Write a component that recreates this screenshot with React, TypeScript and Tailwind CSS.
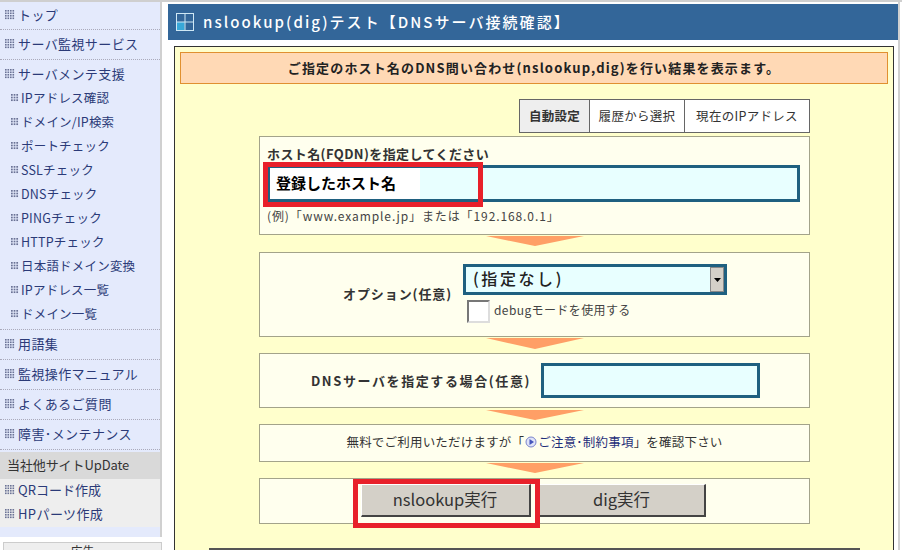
import React from "react";

function Dots({ small }: { small?: boolean }) {
  const n = small ? 3 : 4;
  const cells = [];
  for (let y = 0; y < n; y++) for (let x = 0; x < n; x++) cells.push(<rect key={x + "-" + y} x={x * 2.5} y={y * 2.5} width="1.6" height="1.6" fill="#6b7396" />);
  return (
    <svg width={small ? 8 : 10} height={small ? 8 : 10} viewBox={small ? "0 0 7.5 7.5" : "0 0 10 10"} className="shrink-0">
      {cells}
    </svg>
  );
}

function Top({ label, cls }: { label: string; cls: string }) {
  return (
    <div className={"flex items-center gap-[3px] pl-[5px] text-[13px] tracking-[0.4px] text-[#2b3a78] " + cls}>
      <Dots />
      <span>{label}</span>
    </div>
  );
}

function Sub({ label }: { label: string }) {
  return (
    <div className="flex h-[24px] items-center gap-[2px] pl-[11px] text-[12.5px] tracking-[0.2px] text-[#2b3a78]">
      <Dots small />
      <span>{label}</span>
    </div>
  );
}

function Arrow({ h = 10 }: { h?: number }) {
  return (
    <div className="flex justify-center">
      <svg width="98" height={h} viewBox="0 0 98 10" preserveAspectRatio="none">
        <polygon points="0,0 98,0 49,10" fill="#ff9f66" />
      </svg>
    </div>
  );
}

const dotted = "border-b border-dotted border-[#aab] pb-[2px]";

export default function App() {
  return (
    <div className="flex h-[550px] w-[902px] overflow-hidden border-t-2 border-[#cfcfcf] bg-white font-['Noto_Sans_CJK_JP','Liberation_Sans',sans-serif]">
      <aside className="flex w-[162px] shrink-0 flex-col">
        <div className="border-r-2 border-[#d0d0d0] bg-[#e4eafc]">
          <Top label="トップ" cls={"h-[28px] " + dotted} />
          <Top label="サーバ監視サービス" cls={"h-[30px] " + dotted} />
          <div className="border-b border-dotted border-[#aab] pb-[3px] pt-[2px]">
            <Top label="サーバメンテ支援" cls="h-[24px]" />
            {["IPアドレス確認", "ドメイン/IP検索", "ポートチェック", "SSLチェック", "DNSチェック", "PINGチェック", "HTTPチェック", "日本語ドメイン変換", "IPアドレス一覧", "ドメイン一覧"].map((s) => (
              <Sub key={s} label={s} />
            ))}
          </div>
          <Top label="用語集" cls={"h-[30px] " + dotted} />
          <Top label="監視操作マニュアル" cls={"h-[30px] " + dotted} />
          <Top label="よくあるご質問" cls={"h-[30px] " + dotted} />
          <Top label="障害･メンテナンス" cls={"h-[30px] " + dotted} />
          <div className="h-[2px]" />
          <div className="flex h-[27px] items-center bg-[#d9d9d9] pb-[1px] pl-[7px] text-[13px] tracking-[-0.1px] text-[#333]">当社他サイトUpDate</div>
          <div className="bg-[#eeeeee]">
            <Top label="QRコード作成" cls="h-[24px] pb-[2px] tracking-[0px]" />
            <Top label="HPパーツ作成" cls="h-[24px] pb-[2px] tracking-[0.2px]" />
          </div>
          <div className="h-[10px]" />
        </div>
        <div className="ml-[3px] mt-[5px] flex h-[20px] justify-center border border-[#ccc] bg-[#eeeeee] text-[12px] leading-[15px] text-[#333]">広告</div>
      </aside>

      <main className="ml-[6px] flex w-[732px] flex-col border-r-2 border-[#d0d0d0] pt-[2px]">
        <div className="flex h-[36px] shrink-0 items-center gap-[9px] bg-[#336699] pl-[8px] pr-[2px] text-[15px] font-medium tracking-[2.05px] text-white">
          <svg width="18" height="18" viewBox="0 0 18 18" className="shrink-0">
            <rect x="0.5" y="0.5" width="17" height="17" fill="none" stroke="#cfe8f5" />
            <rect x="1" y="9" width="7.5" height="8" fill="#38a8d8" />
            <line x1="9" y1="0" x2="9" y2="18" stroke="#cfe8f5" />
            <line x1="0" y1="9" x2="18" y2="9" stroke="#cfe8f5" />
          </svg>
          <span>nslookup(dig)テスト【DNSサーバ接続確認】</span>
        </div>

        <div className="mb-[-40px] ml-[6px] mr-[4px] mt-[6px] flex-1 border border-[#333] bg-[#ffffcc] px-[5px] pt-[5px]">
          <div className="flex h-[32px] items-center justify-center border border-[#e09030] bg-[#ffd9b5] text-[13px] font-bold tracking-[1.15px] text-[#222]">
            ご指定のホスト名のDNS問い合わせ(nslookup,dig)を行い結果を表示ます。
          </div>

          <div className="ml-[79px] mr-[78px]">
            <div className="ml-[260px] mt-[15px] flex h-[34px] border border-[#666] bg-white text-[12.5px] tracking-[0.3px] text-[#333]">
              <div className="flex w-[70px] items-center justify-center border-r border-[#666] bg-[#eeeeee] font-bold">自動設定</div>
              <div className="flex w-[95px] items-center justify-center border-r border-[#666]">履歴から選択</div>
              <div className="flex flex-1 items-center justify-center">現在のIPアドレス</div>
            </div>

            <div className="relative mt-[3px] h-[99px] border border-[#a3a38a] bg-[#ffffee] px-[7px] pt-[8px]">
              <div className="text-[13px] font-bold leading-[18px] tracking-[0.4px] text-[#333]">ホスト名(FQDN)を指定してください</div>
              <div className="mt-[2px] h-[37px] w-[533px] border-[3px] border-[#1f6080] bg-[#e8ffff]">
                <div className="flex h-full w-[150px] items-center bg-white pl-[6px] text-[15px] font-bold text-black">登録したホスト名</div>
              </div>
              <div className="mt-[5px] text-[12px] leading-[18px] tracking-[0.9px] text-[#444]">(例)「www.example.jp」または「192.168.0.1」</div>
              <div className="absolute left-[3px] top-[25px] h-[45px] w-[220px] border-[5px] border-[#e8202a]" />
            </div>

            <div className="mt-[1px]"><Arrow /></div>

            <div className="mt-[6px] flex h-[85px] border border-[#a3a38a] bg-[#ffffee]">
              <div className="flex w-[203px] items-center justify-end pb-[2px] pr-[11px] text-[13px] font-bold tracking-[0.9px] text-[#333]">オプション(任意)</div>
              <div className="pt-[11px]">
                <div className="flex h-[31px] w-[264px] items-center justify-between border-[3px] border-[#1f6080] bg-[#e8ffff] text-[16px] font-medium tracking-[2.6px] text-[#222]">
                  <span className="pb-[4px] pl-[7px]">(指定なし)</span>
                  <span className="flex h-[25px] w-[14px] items-center justify-center border border-[#888] bg-[#d4d0c8]">
                    <svg width="7" height="4" viewBox="0 0 7 4"><polygon points="0,0 7,0 3.5,4" fill="#000" /></svg>
                  </span>
                </div>
                <div className="mt-[5px] flex items-center gap-[4px] pl-[4px] text-[12px] tracking-[0.4px] text-[#444]">
                  <span className="h-[23px] w-[23px] border-2 border-b-[#ddd] border-l-[#777] border-r-[#ddd] border-t-[#777] bg-white" />
                  <span className="pb-[4px]">debugモードを使用する</span>
                </div>
              </div>
            </div>

            <div className="mt-[1px]"><Arrow h={11} /></div>

            <div className="mt-[4px] flex h-[55px] items-center border border-[#a3a38a] bg-[#ffffee]">
              <div className="w-[277px] whitespace-nowrap pr-[6px] text-right text-[13px] font-bold tracking-[1.6px] text-[#333]">DNSサーバを指定する場合(任意)</div>
              <div className="ml-[4px] h-[35px] w-[219px] border-[3px] border-[#1f6080] bg-[#e8ffff]" />
            </div>

            <div className="mt-[2px]"><Arrow /></div>

            <div className="mt-[4px] flex h-[38px] items-center justify-center border border-[#a3a38a] bg-[#ffffee] pb-[2px] text-[12.5px] tracking-[0.2px] text-[#333]">
              <span>無料でご利用いただけますが「</span>
              <svg width="12" height="12" viewBox="0 0 12 12" className="mx-[1px]">
                <circle cx="6" cy="6" r="5" fill="#dfe3f8" stroke="#7a84cc" />
                <polygon points="4.5,3 9,6 4.5,9" fill="#4455bb" />
              </svg>
              <span className="text-[#1f2f7a]">ご注意･制約事項</span>
              <span>」を確認下さい</span>
            </div>

            <div className="mt-[1px]"><Arrow /></div>

            <div className="relative mt-[5px] flex h-[46px] items-start justify-center gap-[8px] border border-[#a3a38a] bg-[#ffffee] pr-[3px] pt-[5px]">
              <div className="flex h-[33px] w-[170px] items-center justify-center border-b-2 border-l border-r-2 border-t border-b-[#444] border-l-white border-r-[#444] border-t-white bg-[#d4d0c8] pb-[2px] text-[16.5px] text-[#333]">nslookup実行</div>
              <div className="flex h-[33px] w-[167px] items-center justify-center border-b-2 border-l border-r-2 border-t border-b-[#444] border-l-white border-r-[#444] border-t-white bg-[#d4d0c8] pb-[2px] text-[16.5px] text-[#333]">dig実行</div>
              <div className="absolute left-[93px] top-0 h-[49px] w-[187px] border-[5px] border-[#e8202a]" />
            </div>

            <div className="mx-[-50px] mt-[24px] h-[2px] bg-[#555]" />
          </div>
        </div>
      </main>
    </div>
  );
}
